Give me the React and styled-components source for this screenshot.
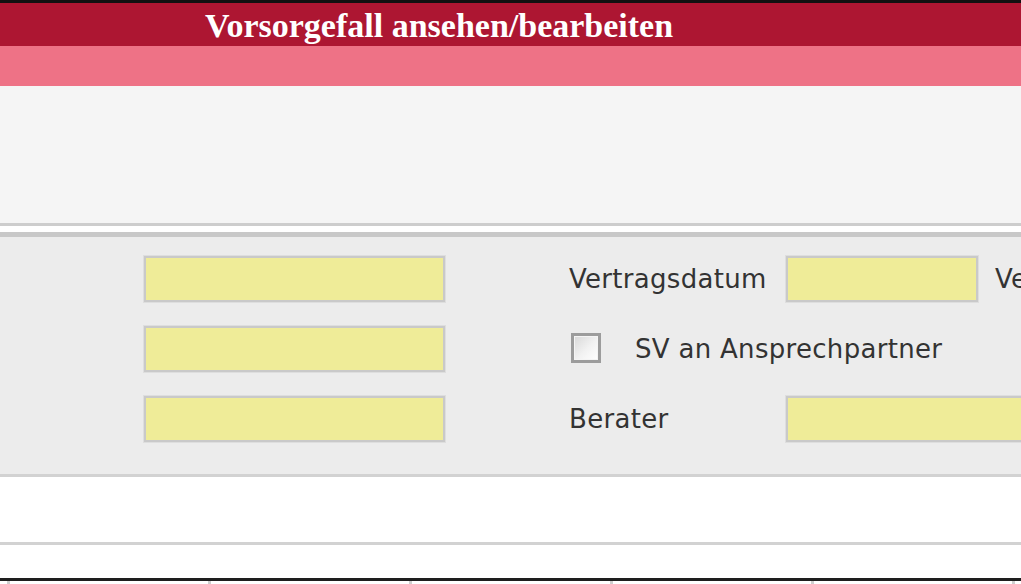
import React from "react"
import styled, { createGlobalStyle } from "styled-components"

const Global = createGlobalStyle`
  html, body {
    margin: 0;
    padding: 0;
    background: #fff;
    overflow: hidden;
  }
  body {
    font-family: "DejaVu Sans", Verdana, sans-serif;
  }
`

const Page = styled.div`
  width: 1021px;
  height: 584px;
  overflow: hidden;
  border-top: 3px solid #111;
  box-sizing: border-box;
`

const TitleBar = styled.div`
  height: 43px;
  background: #ad1632;
  display: flex;
  align-items: center;
  padding-left: 205px;
  white-space: nowrap;
  h1 {
    margin: 0;
    font-family: "Liberation Serif", "Times New Roman", serif;
    font-weight: bold;
    font-size: 34px;
    line-height: 1;
    color: #fff;
    margin-top: 2px;
  }
`

const SubBar = styled.div`
  height: 40px;
  background: #ee7286;
`

const Toolbar = styled.div`
  height: 137px;
  background: #f5f5f5;
  border-bottom: 3px solid #cdcdcd;
`

const Spacer = styled.div`
  height: ${(p) => p.h}px;
  background: #fff;
  border-bottom: ${(p) => (p.line ? `3px solid ${p.line}` : "none")};
`

const Form = styled.div`
  background: #ececec;
  border-top: 5px solid #c8c8c8;
  border-bottom: 3px solid #d2d2d2;
  padding: 19px 0 32px 144px;
  display: grid;
  grid-template-columns: 425px 217px 209px 1fr;
  grid-auto-rows: 46px;
  row-gap: 24px;
  align-items: center;
  white-space: nowrap;
`

const Field = styled.div`
  width: ${(p) => p.w}px;
  height: 46px;
  box-sizing: border-box;
  background: #efec98;
  border: 2px solid #c9c9c9;
  box-shadow: 0 0 0 1px #dedede;
  grid-column: ${(p) => p.col || "auto"};
`

const Label = styled.div`
  font-size: 26px;
  letter-spacing: 0.3px;
  color: #333;
  grid-column: ${(p) => p.col || "auto"};
`

const Check = styled.label`
  grid-column: 2 / span 3;
  display: flex;
  align-items: center;
  gap: 34px;
  padding-left: 2px;
  font-size: 26px;
  letter-spacing: 0.3px;
  color: #333;
  span.box {
    width: 30px;
    height: 30px;
    margin-top: -3px;
    box-sizing: border-box;
    border: 3px solid #9c9c9c;
    background: linear-gradient(135deg, #d8d8d8 0%, #f2f2f2 55%, #ffffff 100%);
    box-shadow: inset 0 0 0 1px #f4f4f4;
  }
`

const Ticks = styled.div`
  height: 3px;
  display: grid;
  grid-template-columns: repeat(6, 201px);
  padding-left: 7px;
  border-top: 3px solid #1e1e1e;
  span {
    width: 3px;
    background: #cfcfcf;
  }
`

const App = () => {
  return (
    <>
      <Global />
      <Page>
        <TitleBar>
          <h1>Vorsorgefall ansehen/bearbeiten</h1>
        </TitleBar>
        <SubBar />
        <Toolbar />
        <Spacer h={6} />
        <Form>
          <Field w={301} />
          <Label>Vertragsdatum</Label>
          <Field w={192} />
          <Label>Vertragsende</Label>

          <Field w={301} />
          <Check>
            <span className="box" />
            SV an Ansprechpartner
          </Check>

          <Field w={301} />
          <Label>Berater</Label>
          <Field w={301} col="3 / span 2" />
        </Form>
        <Spacer h={65} line="#d2d2d2" />
        <Spacer h={33} />
        <Ticks>
          {[0, 1, 2, 3, 4, 5].map((i) => (
            <span key={i} />
          ))}
        </Ticks>
      </Page>
    </>
  )
}

export default App
